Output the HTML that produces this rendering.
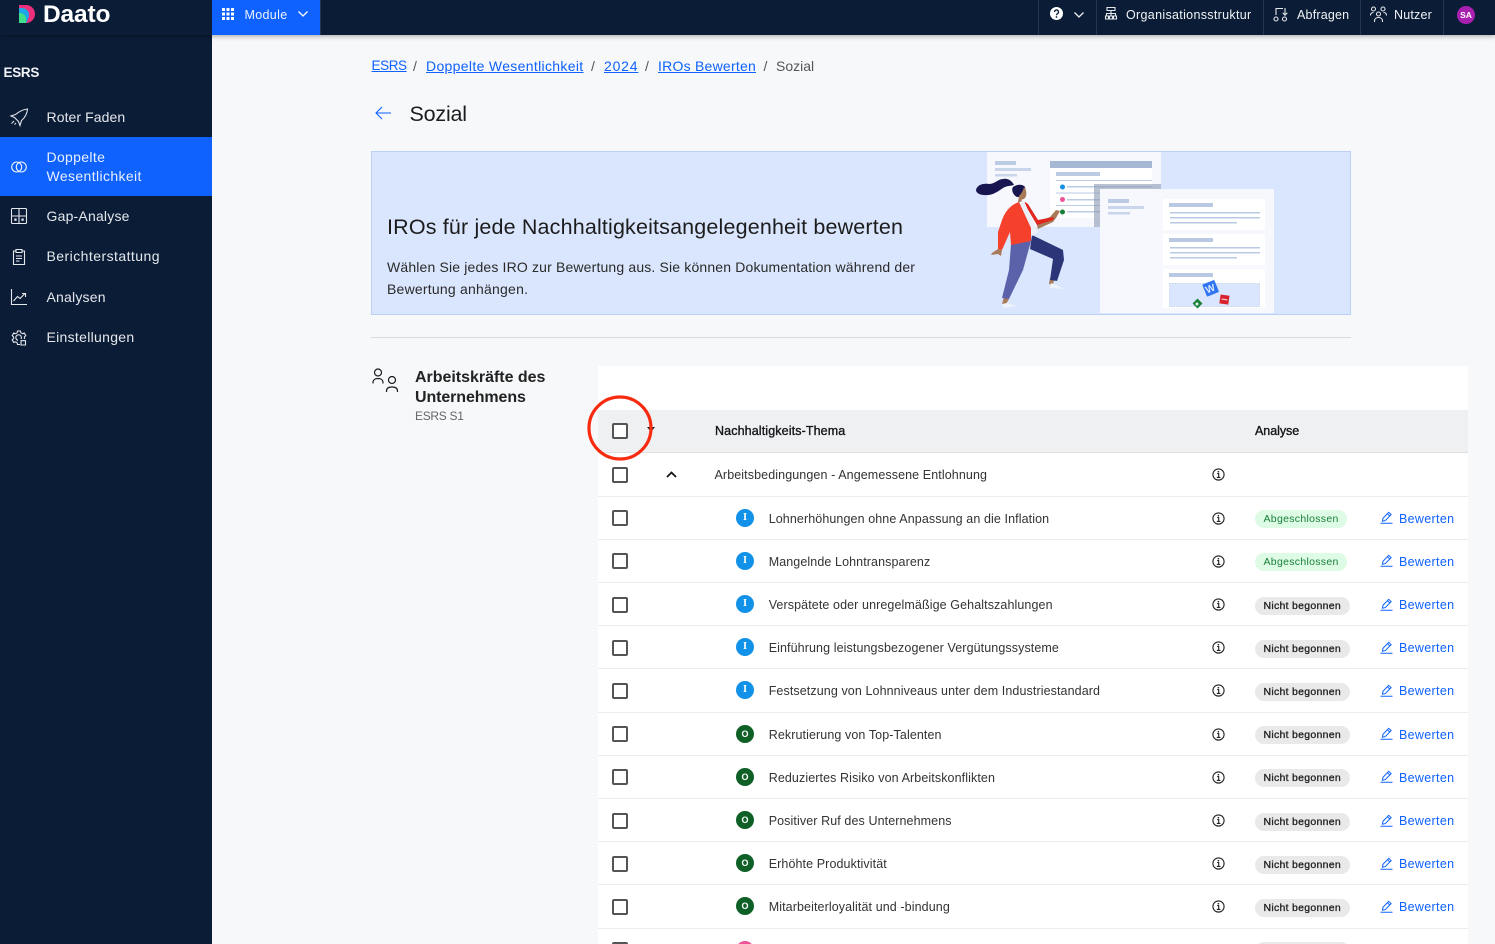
<!DOCTYPE html>
<html lang="de">
<head>
<meta charset="utf-8">
<title>Sozial</title>
<style>
html,body{margin:0;padding:0;width:1495px;height:944px;overflow:hidden;background:#f7f8fa;font-family:"Liberation Sans",sans-serif;color:#222}
*{box-sizing:border-box}
.a{position:absolute;white-space:nowrap}
#top{position:absolute;left:0;top:0;width:1495px;height:35px;background:#0b1c36;box-shadow:0 1px 5px rgba(0,0,0,.35);z-index:5}
#side{position:absolute;left:0;top:35px;width:212px;height:909px;background:#0b1c36;z-index:4}
.tt{color:#f0f2f5;font-size:12.5px;letter-spacing:.33px;line-height:16px;top:7px}
.vd{position:absolute;top:0;width:1px;height:35px;background:#26364f}
.nav{color:#e4e7ec;font-size:14px;line-height:19px;left:46.5px}
svg{position:absolute;overflow:visible}
.ic{fill:none;stroke:#e4e7ec;stroke-width:1.1}
.bc{font-size:14px;line-height:18px;top:57px;letter-spacing:.33px;color:#0f62fe;text-decoration:underline}
.sl{font-size:14px;line-height:18px;top:57px;color:#555}
#table{position:absolute;left:598px;top:366px;width:870px;height:578px;background:#fff;overflow:hidden}
#thead{position:absolute;left:0;top:44px;width:870px;height:43px;background:#eff0f2;border-bottom:1px solid #e0e0e0}
.th{font-size:12.5px;-webkit-text-stroke:.35px #161616;color:#161616;top:13px;line-height:16px}
.r{position:absolute;left:0;width:870px;height:43.2px;border-bottom:1px solid #ececec}
.cb{position:absolute;left:14px;top:13.6px;width:16px;height:16px;border:2px solid #555;border-radius:2px;background:#fff}
.b{position:absolute;left:138px;top:12px;width:18px;height:18px;border-radius:50%;color:#fff;font-size:10.5px;font-weight:bold;text-align:center;line-height:18px}
.bi{background:#1192e8;font-family:"Liberation Serif",serif}
.bo{background:#0e6027;font-size:9px}
.bp{background:#ee5396}
.t{position:absolute;left:170.7px;top:14.1px;font-size:12.5px;line-height:16px;letter-spacing:.1px;color:#333;white-space:nowrap}
.inf{left:614px;top:15px}
.p{position:absolute;left:657px;top:13.6px;height:18px;border-radius:9px;font-size:10.5px;line-height:18px;padding-left:8.5px;letter-spacing:.3px;white-space:nowrap}
.pg{width:92px;background:#defbe6;color:#198038}
.pn{width:95px;background:#e9e9e9;color:#222;-webkit-text-stroke:.3px #222;letter-spacing:.28px}
.ed{left:781.5px;top:14.500px}
.bw{position:absolute;left:801px;top:14.100px;font-size:12.5px;line-height:16px;letter-spacing:.32px;color:#0f62fe;white-space:nowrap}
</style>
</head>
<body>
<svg width="0" height="0" style="position:absolute">
<defs>
<symbol id="info" viewBox="0 0 13 13"><circle cx="6.5" cy="6.5" r="5.6" fill="none" stroke="#222" stroke-width="1.1"/><path d="M5.2 5.6h1.5v3.6M4.800 9.400h3.600" fill="none" stroke="#222" stroke-width="1.1"/><circle cx="6.400" cy="3.700" r=".8" fill="#222"/></symbol>
<symbol id="edit" viewBox="0 0 13 13"><path d="M.5 12.200h12M2.400 10.200l.6-2.900L8.700 1.300l2.400 2.300-5.800 6-2.900.6zM7.400 2.700l2.400 2.300" fill="none" stroke="#0f62fe" stroke-width="1"/></symbol>
</defs>
</svg>

<div id="top">
<svg style="left:18px;top:5px" width="18" height="18" viewBox="0 0 18 18"><path d="M1 0h7a9 9 0 0 1 0 18H1z" fill="#ee2f7b"/><path d="M1 3h3a7 7 0 0 1 7 7c0 2-1 5-3 8H1z" fill="#1ea7e8"/><path d="M1 8h1a6 6 0 0 1 6 6v4H1z" fill="#3ee08a"/></svg>
<div class="a" style="left:43px;top:0;font-size:24.500px;font-weight:bold;color:#fff;line-height:30px;letter-spacing:-.15px">Daato</div>
<div style="position:absolute;left:212px;top:0;width:109px;height:35px;background:#0f62fe;border-right:1px solid #26364f"></div>
<svg style="left:222px;top:8px" width="12" height="12" viewBox="0 0 12 12" fill="#fff"><path d="M0 0h3v3H0zM4.500 0h3v3h-3zM9 0h3v3H9zM0 4.500h3v3H0zM4.500 4.500h3v3h-3zM9 4.500h3v3H9zM0 9h3v3H0zM4.500 9h3v3h-3zM9 9h3v3H9z"/></svg>
<div class="a tt" style="left:244.500px;color:#eef2ff">Module</div>
<svg style="left:298px;top:11px" width="10" height="6" viewBox="0 0 10 6"><path d="M.5.500 5 5 9.500.500" fill="none" stroke="#fff" stroke-width="1.300"/></svg>

<div class="vd" style="left:1038px"></div>
<div class="vd" style="left:1096px"></div>
<div class="vd" style="left:1263px"></div>
<div class="vd" style="left:1360px"></div>
<div class="vd" style="left:1443px"></div>
<svg style="left:1050px;top:7px" width="13" height="13" viewBox="0 0 13 13"><circle cx="6.500" cy="6.500" r="6.500" fill="#fff"/><path d="M4.500 5a2 2 0 1 1 3 1.700c-.7.400-1 .7-1 1.500" fill="none" stroke="#0b1c36" stroke-width="1.300"/><circle cx="6.500" cy="10" r=".9" fill="#0b1c36"/></svg>
<svg style="left:1074px;top:12px" width="10" height="6" viewBox="0 0 10 6"><path d="M.5.500 5 5 9.500.500" fill="none" stroke="#eee" stroke-width="1.300"/></svg>
<svg class="ic" style="left:1105px;top:7px" width="12" height="13" viewBox="0 0 12 13"><path d="M2 .5h8v3H2zM6 3.500v5.500M1.500 9V6.500h9V9M.5 9h3v3h-3zM4.500 9h3v3h-3zM8.500 9h3v3h-3z"/></svg>
<div class="a tt" style="left:1126px;letter-spacing:.32px">Organisationsstruktur</div>
<svg class="ic" style="left:1273px;top:7px" width="15" height="15" viewBox="0 0 15 15"><path d="M3 8V1.500h7M12 1v7M9.700 5.800 12 8.200l2.300-2.400"/><circle cx="3" cy="12" r="2"/><circle cx="11.500" cy="12" r="2"/></svg>
<div class="a tt" style="left:1297px;letter-spacing:.2px">Abfragen</div>
<svg class="ic" style="left:1370px;top:6px" width="17" height="17" viewBox="0 0 17 17"><circle cx="3.500" cy="3" r="2"/><circle cx="13" cy="3" r="2"/><circle cx="8.500" cy="8" r="2"/><path d="M.5 9.500c0-2 1-3 3-3M16.500 9.500c0-2-1-3-3-3M4.500 16v-1c0-2 1.500-3.500 4-3.500s4 1.500 4 3.500v1"/></svg>
<div class="a tt" style="left:1394px;letter-spacing:.2px">Nutzer</div>
<div class="a" style="left:1457px;top:5.500px;width:18px;height:18px;border-radius:50%;background:#a820b0;color:#fff;font-size:8.500px;font-weight:bold;text-align:center;line-height:18px">SA</div>
</div>

<div id="side">
<div class="a" style="left:3.500px;top:29px;font-size:13.500px;font-weight:bold;color:#f2f4f7;line-height:18px;letter-spacing:-.3px">ESRS</div>

<svg class="ic" style="left:10px;top:73px" width="18" height="18" viewBox="0 0 18 18"><path d="M5.500 6.500 1 8l3.500 1.500 4 4L10 17.500l1.500-5c3-2.500 5.500-6 6-11.500-5.500.5-9 3-12 5.500zM4.500 9.500 8.500 13.500M4 13l-2.500 2.500M6 15l-1.500 1.500"/></svg>
<div class="a nav" style="top:73px;letter-spacing:.09px">Roter Faden</div>

<div style="position:absolute;left:0;top:102px;width:212px;height:59px;background:#0f62fe"></div>
<svg class="ic" style="left:11px;top:126px;stroke:#f0f4ff" width="16" height="12" viewBox="0 0 16 12"><circle cx="5.700" cy="6" r="5"/><circle cx="10.300" cy="6" r="5"/></svg>
<div class="a nav" style="top:113px;color:#e8efff;letter-spacing:.33px">Doppelte</div>
<div class="a nav" style="top:132px;color:#e8efff;letter-spacing:.38px">Wesentlichkeit</div>

<svg class="ic" style="left:11px;top:173px" width="16" height="16" viewBox="0 0 16 16"><rect x=".5" y=".5" width="15" height="15" rx="1"/><path d="M.5 8h15M8 .5v15"/><rect x="3.300" y="10.500" width="2.300" height="2.300" fill="#e4e7ec" stroke="none"/><rect x="10.400" y="10.500" width="2.300" height="2.300" fill="#e4e7ec" stroke="none"/></svg>
<div class="a nav" style="top:172px;letter-spacing:.2px">Gap-Analyse</div>

<svg class="ic" style="left:13px;top:214px" width="12" height="16" viewBox="0 0 12 16"><path d="M3 2H.5v13.500h11V2H9M3 .5h6v3H3zM3 7h6M3 9.500h6M3 12h3.500"/></svg>
<div class="a nav" style="top:212px;letter-spacing:.45px">Berichterstattung</div>

<svg class="ic" style="left:11px;top:254px" width="16" height="16" viewBox="0 0 16 16"><path d="M.5 0v15.500H16M2.500 12l4-4.500 2.500 2 5-5M11 4.500h3.500V8"/></svg>
<div class="a nav" style="top:253px;letter-spacing:.2px">Analysen</div>

<svg class="ic" style="left:11px;top:295px" width="16" height="16" viewBox="0 0 16 16"><path d="M9 14.500H6.500l-.4-1.800-1.600-.9-1.800.6L1.200 9.800 2.600 8.500V7L1.200 5.700 2.700 3.100l1.800.6 1.600-.9.4-1.800h3l.4 1.800 1.600.9 1.800-.6 1.500 2.600L13.400 7v2"/><path d="M10 9a2.800 2.800 0 1 0-3 1.300"/><path d="M10 10.700h4.500V15H10z"/></svg>
<div class="a nav" style="top:293px;letter-spacing:.3px">Einstellungen</div>
</div>

<div class="a bc" style="left:371.500px;font-size:13.500px;letter-spacing:-.4px">ESRS</div>
<div class="a sl" style="left:413px">/</div>
<div class="a bc" style="left:426px">Doppelte Wesentlichkeit</div>
<div class="a sl" style="left:591px">/</div>
<div class="a bc" style="left:604px;letter-spacing:.8px">2024</div>
<div class="a sl" style="left:645px">/</div>
<div class="a bc" style="left:658px;letter-spacing:.24px">IROs Bewerten</div>
<div class="a sl" style="left:763.500px">/</div>
<div class="a sl" style="left:776px">Sozial</div>

<svg style="left:375px;top:106px" width="16" height="14" viewBox="0 0 16 14"><path d="M16 7H1M7 1 1 7l6 6" fill="none" stroke="#0f62fe" stroke-width="1.100"/></svg>
<div class="a" style="left:409.500px;top:101px;font-size:21.500px;line-height:27px;color:#1c1c1c;letter-spacing:-.2px">Sozial</div>

<div style="position:absolute;left:371px;top:151px;width:980px;height:164px;background:#dae6fd;border:1px solid #bcd0f5;overflow:hidden"></div>
<div class="a" style="left:387px;top:213px;font-size:21.500px;line-height:28px;color:#1c1c1c;letter-spacing:.16px">IROs für jede Nachhaltigkeitsangelegenheit bewerten</div>
<div class="a" style="left:387px;top:258px;font-size:14px;line-height:18px;color:#2a2a2a;letter-spacing:.16px">Wählen Sie jedes IRO zur Bewertung aus. Sie können Dokumentation während der</div>
<div class="a" style="left:387px;top:280px;font-size:14px;line-height:18px;color:#2a2a2a;letter-spacing:.22px">Bewertung anhängen.</div>

<svg style="left:0;top:0" width="1495" height="944" viewBox="0 0 1495 944">
<rect x="987" y="152" width="174" height="75" fill="#f6f8fe"/>
<rect x="995" y="161" width="21" height="4" fill="#bccbe4"/>
<rect x="995" y="168" width="36" height="3" fill="#c8d5ea"/>
<rect x="995" y="174" width="22" height="2.500" fill="#c8d5ea"/>
<rect x="1050" y="161" width="102" height="7" fill="#a6b8d4"/>
<rect x="1050" y="168" width="102" height="50" fill="#fff"/>
<rect x="1056" y="172" width="44" height="4" fill="#bccbe4"/>
<rect x="1056" y="180" width="96" height="1" fill="#bccbe4"/>
<rect x="1056" y="192.500" width="96" height="1" fill="#bccbe4"/>
<rect x="1056" y="205" width="96" height="1" fill="#bccbe4"/>
<rect x="1067" y="186" width="85" height="1.500" fill="#bccbe4"/>
<rect x="1067" y="199" width="85" height="1.500" fill="#bccbe4"/>
<rect x="1067" y="211" width="85" height="1.500" fill="#bccbe4"/>
<circle cx="1062.500" cy="187" r="2.500" fill="#1192e8"/>
<circle cx="1062.500" cy="199.500" r="2.500" fill="#ee5396"/>
<circle cx="1062.500" cy="212" r="2.500" fill="#198038"/>
<rect x="1094" y="184" width="67" height="5" fill="#8a99b3" opacity=".6"/>
<rect x="1094" y="189" width="6" height="38" fill="#8a99b3" opacity=".6"/>
<rect x="1100" y="189" width="174" height="124" fill="#f6f8fe"/>
<rect x="1108" y="199" width="21" height="4" fill="#bccbe4"/>
<rect x="1108" y="206" width="36" height="3" fill="#c8d5ea"/>
<rect x="1108" y="212" width="22" height="2.500" fill="#c8d5ea"/>
<g fill="#fff"><rect x="1163" y="199" width="102" height="31"/><rect x="1163" y="234" width="102" height="31"/><rect x="1163" y="269" width="102" height="39"/></g>
<g fill="#b9c9e3"><rect x="1169" y="203" width="44" height="4"/><rect x="1170" y="212" width="90" height="1.500"/><rect x="1170" y="217" width="90" height="1.500"/><rect x="1170" y="222" width="67" height="1.500"/><rect x="1169" y="238" width="44" height="4"/><rect x="1170" y="247" width="90" height="1.500"/><rect x="1170" y="252" width="90" height="1.500"/><rect x="1170" y="257" width="67" height="1.500"/><rect x="1169" y="273" width="44" height="4"/></g>
<rect x="1169.500" y="283.500" width="90" height="23" fill="#dae6fd" stroke="#b9c9e3" stroke-width=".7" stroke-dasharray="1.500 1"/>
<rect x="1204" y="282" width="13" height="13" rx="1" transform="rotate(-22 1210 288)" fill="#2f74f2"/>
<text x="1210" y="292" font-family="Liberation Sans,sans-serif" font-size="10" font-weight="bold" fill="#dbe8ff" text-anchor="middle" transform="rotate(-22 1210 288)">W</text>
<rect x="1220" y="295" width="9" height="9" transform="rotate(8 1224 299)" fill="#d8232f"/>
<rect x="1221.500" y="298.800" width="6" height="1.200" fill="#f5c8cb" transform="rotate(8 1224 299)"/>
<rect x="1194" y="300" width="7" height="7" transform="rotate(45 1197.500 303.500)" fill="#198038"/>
<circle cx="1197" cy="304" r="1.500" fill="#dff5e5"/>
<path d="M976 190c1-5 7-7 13-6 6 0 9-5 14-5 5-1 9 2 11 6-4 1-8 1-11 3-6 4-11 8-19 7-4 0-8-2-8-5z" fill="#171650"/>
<path d="M1013 187c4-3 10-3 12 0 1 3-1 7-3 10h-5c-4-2-6-7-4-10z" fill="#171650"/>
<path d="M1024 187c2 2 3 6 2 9-1 3-3 4-4 3l-1 5-3-2 1-6c2-2 4-5 5-9z" fill="#a97a58"/>
<path d="M1036 222l14-5 6-7 4 1-4 7-3 4-15 7z" fill="#a97a58"/>
<path d="M998 249l-6 4-1 2 7-1 3 2 1-6z" fill="#a97a58"/>
<path d="M1009 299l-3 5h-4l2-7zM1054 280l-1 5-4-1 1-6z" fill="#a97a58"/>
<path d="M1002 304l5-1 10 3-14 2zM1051 283l3 1 10 5-14-1z" fill="#eef2fa"/>
<path d="M1032 235l31 15 1 10-7 21-7-1 3-21-23-10z" fill="#2b3578"/>
<path d="M1024 203l13 22 16-5 1-3-16 3-10-16-3-2z" fill="#e0261f"/>
<path d="M1011 244l20-3-8 29-14 29-7-1 7-28z" fill="#5c62a9"/>
<path d="M1019 202l5-1 14 31-6 4-2-8z" fill="#eceff5"/>
<path d="M1019 202C1010 205 1005 212 1002 220L998 232 998 249 1002 250 1010 232 1011 245 1031 241 1031 228z" fill="#f5402b"/>
</svg>

<div style="position:absolute;left:371px;top:337px;width:980px;height:1px;background:#d9dbe0"></div>

<svg style="left:372px;top:368px;stroke:#1c1c1c;fill:none;stroke-width:1.200" width="28" height="26" viewBox="0 0 28 26"><circle cx="6" cy="4.500" r="3.500"/><circle cx="20" cy="12" r="3.500"/><path d="M1 15.500v-1c0-2.500 2-4 5-4s5 1.500 5 4v1M14.500 24v-1c0-2.500 2-4 5.500-4s5.500 1.500 5.500 4v1"/></svg>
<div class="a" style="left:415px;top:368px;font-size:16px;font-weight:bold;line-height:20px;color:#222;letter-spacing:-.02px">Arbeitskräfte des</div>
<div class="a" style="left:415px;top:388px;font-size:16px;font-weight:bold;line-height:20px;color:#222;letter-spacing:-.1px">Unternehmens</div>
<div class="a" style="left:415px;top:408px;font-size:12px;line-height:16px;color:#666;letter-spacing:-.3px">ESRS S1</div>

<div id="table">
<div id="thead">
<div class="cb" style="top:13px"></div>
<svg style="left:49px;top:17px" width="8" height="6" viewBox="0 0 8 6"><path d="M0 0h8L4 5z" fill="#222"/></svg>
<div class="a th" style="left:117px;letter-spacing:.12px">Nachhaltigkeits-Thema</div>
<div class="a th" style="left:657px;letter-spacing:-.05px">Analyse</div>
</div>

<div class="r" style="top:87.400px"><div class="cb"></div><svg style="left:68px;top:18px" width="11" height="7" viewBox="0 0 11 7"><path d="M1 6l4.500-4.500L10 6" fill="none" stroke="#161616" stroke-width="1.800"/></svg><div class="t" style="left:116.500px">Arbeitsbedingungen - Angemessene Entlohnung</div><svg class="inf" width="13" height="13"><use href="#info"/></svg></div>

<div class="r" style="top:130.600px"><div class="cb"></div><div class="b bi">I</div><div class="t">Lohnerhöhungen ohne Anpassung an die Inflation</div><svg class="inf" width="13" height="13"><use href="#info"/></svg><div class="p pg">Abgeschlossen</div><svg class="ed" width="13" height="13"><use href="#edit"/></svg><div class="bw">Bewerten</div></div>
<div class="r" style="top:173.800px"><div class="cb"></div><div class="b bi">I</div><div class="t">Mangelnde Lohntransparenz</div><svg class="inf" width="13" height="13"><use href="#info"/></svg><div class="p pg">Abgeschlossen</div><svg class="ed" width="13" height="13"><use href="#edit"/></svg><div class="bw">Bewerten</div></div>
<div class="r" style="top:217px"><div class="cb"></div><div class="b bi">I</div><div class="t">Verspätete oder unregelmäßige Gehaltszahlungen</div><svg class="inf" width="13" height="13"><use href="#info"/></svg><div class="p pn">Nicht begonnen</div><svg class="ed" width="13" height="13"><use href="#edit"/></svg><div class="bw">Bewerten</div></div>
<div class="r" style="top:260.200px"><div class="cb"></div><div class="b bi">I</div><div class="t">Einführung leistungsbezogener Vergütungssysteme</div><svg class="inf" width="13" height="13"><use href="#info"/></svg><div class="p pn">Nicht begonnen</div><svg class="ed" width="13" height="13"><use href="#edit"/></svg><div class="bw">Bewerten</div></div>
<div class="r" style="top:303.400px"><div class="cb"></div><div class="b bi">I</div><div class="t">Festsetzung von Lohnniveaus unter dem Industriestandard</div><svg class="inf" width="13" height="13"><use href="#info"/></svg><div class="p pn">Nicht begonnen</div><svg class="ed" width="13" height="13"><use href="#edit"/></svg><div class="bw">Bewerten</div></div>
<div class="r" style="top:346.600px"><div class="cb"></div><div class="b bo">O</div><div class="t">Rekrutierung von Top-Talenten</div><svg class="inf" width="13" height="13"><use href="#info"/></svg><div class="p pn">Nicht begonnen</div><svg class="ed" width="13" height="13"><use href="#edit"/></svg><div class="bw">Bewerten</div></div>
<div class="r" style="top:389.800px"><div class="cb"></div><div class="b bo">O</div><div class="t">Reduziertes Risiko von Arbeitskonflikten</div><svg class="inf" width="13" height="13"><use href="#info"/></svg><div class="p pn">Nicht begonnen</div><svg class="ed" width="13" height="13"><use href="#edit"/></svg><div class="bw">Bewerten</div></div>
<div class="r" style="top:433px"><div class="cb"></div><div class="b bo">O</div><div class="t">Positiver Ruf des Unternehmens</div><svg class="inf" width="13" height="13"><use href="#info"/></svg><div class="p pn">Nicht begonnen</div><svg class="ed" width="13" height="13"><use href="#edit"/></svg><div class="bw">Bewerten</div></div>
<div class="r" style="top:476.200px"><div class="cb"></div><div class="b bo">O</div><div class="t">Erhöhte Produktivität</div><svg class="inf" width="13" height="13"><use href="#info"/></svg><div class="p pn">Nicht begonnen</div><svg class="ed" width="13" height="13"><use href="#edit"/></svg><div class="bw">Bewerten</div></div>
<div class="r" style="top:519.400px"><div class="cb"></div><div class="b bo">O</div><div class="t">Mitarbeiterloyalität und -bindung</div><svg class="inf" width="13" height="13"><use href="#info"/></svg><div class="p pn">Nicht begonnen</div><svg class="ed" width="13" height="13"><use href="#edit"/></svg><div class="bw">Bewerten</div></div>
<div class="r" style="top:562.600px"><div class="cb"></div><div class="b bp"></div><div class="p pn"></div></div>
</div>

<svg style="left:586px;top:394px;z-index:6" width="68" height="68" viewBox="0 0 68 68"><circle cx="34" cy="34" r="31" fill="none" stroke="#f92a0d" stroke-width="3.200"/></svg>
</body>
</html>
